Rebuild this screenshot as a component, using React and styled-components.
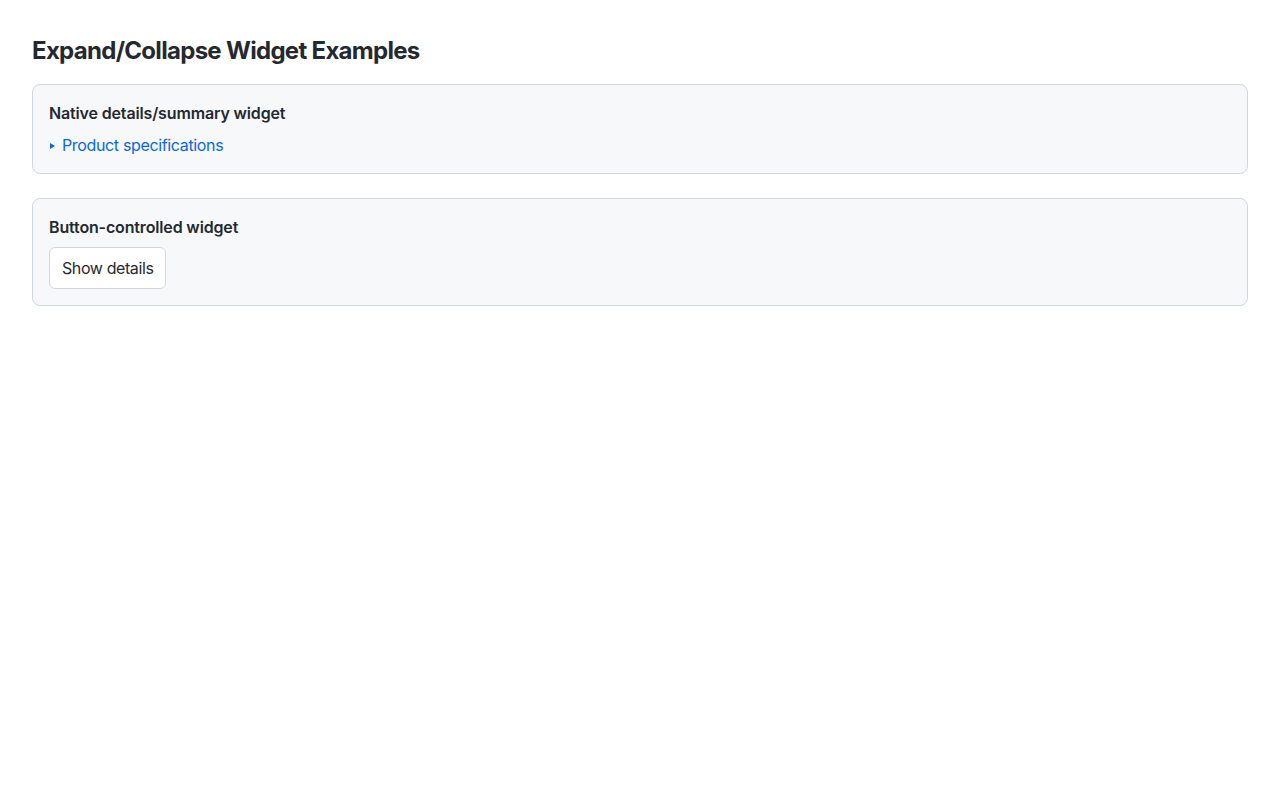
import React, { useState } from 'react'
import styled, { createGlobalStyle } from 'styled-components'

const GlobalStyle = createGlobalStyle`
  html, body {
    margin: 0;
    padding: 0;
    background: #ffffff;
  }

  body {
    font-family: Inter, "Liberation Sans", Arial, sans-serif;
    color: #24292f;
    font-size: 16px;
    line-height: 1.5;
    letter-spacing: -0.35px;
  }
`

export default function App() {
  const [open, setOpen] = useState(false)

  return (
    <>
      <GlobalStyle />
      <Page>
        <Heading>Expand/Collapse Widget Examples</Heading>

        <Card>
          <CardTitle>Native details/summary widget</CardTitle>
          <details>
            <Summary>Product specifications</Summary>
            <Specs>
              <li>Weight: 1.2 kg</li>
              <li>Dimensions: 30 × 20 × 5 cm</li>
              <li>Material: Aluminium</li>
            </Specs>
          </details>
        </Card>

        <Card>
          <CardTitle>Button-controlled widget</CardTitle>
          <ToggleButton
            type="button"
            aria-expanded={open}
            onClick={() => setOpen(!open)}
          >
            {open ? 'Hide details' : 'Show details'}
          </ToggleButton>
          {open && (
            <Panel>
              These details were hidden until the button was pressed.
            </Panel>
          )}
        </Card>
      </Page>
    </>
  )
}

const Page = styled.main`
  display: flex;
  flex-direction: column;
  gap: 24px;
  padding: 32px;
`

const Heading = styled.h1`
  margin: 0 0 -8px;
  padding-top: 1px;
  font-size: 24px;
  line-height: 35px;
  font-weight: 700;
  letter-spacing: -0.7px;
  color: #24292f;
`

const Card = styled.section`
  display: flex;
  flex-direction: column;
  align-items: flex-start;
  gap: 8px;
  padding: 16px;
  background: #f6f8fa;
  border: 1px solid #d0d7de;
  border-radius: 8px;
`

const CardTitle = styled.h2`
  margin: 0;
  font-size: 16px;
  line-height: 24px;
  font-weight: 600;
  letter-spacing: -0.15px;
`

const Summary = styled.summary`
  display: flex;
  align-items: center;
  cursor: pointer;
  color: #0969da;
  font-size: 16px;
  line-height: 24px;
  list-style: none;

  &::-webkit-details-marker {
    display: none;
  }

  &::before {
    content: '';
    display: block;
    width: 0;
    height: 0;
    margin: 1px 7px 0 1px;
    border-left: 5px solid #0969da;
    border-top: 3px solid transparent;
    border-bottom: 3px solid transparent;
  }

  details[open] > &::before {
    transform: rotate(90deg);
  }
`

const Specs = styled.ul`
  margin: 8px 0 0;
  padding-left: 24px;
`

const ToggleButton = styled.button`
  padding: 8px 12px;
  font-family: inherit;
  font-size: 16px;
  line-height: 24px;
  letter-spacing: -0.4px;
  color: #24292f;
  background: #ffffff;
  border: 1px solid #d0d7de;
  border-radius: 6px;
  cursor: pointer;
`

const Panel = styled.p`
  margin: 0;
`
